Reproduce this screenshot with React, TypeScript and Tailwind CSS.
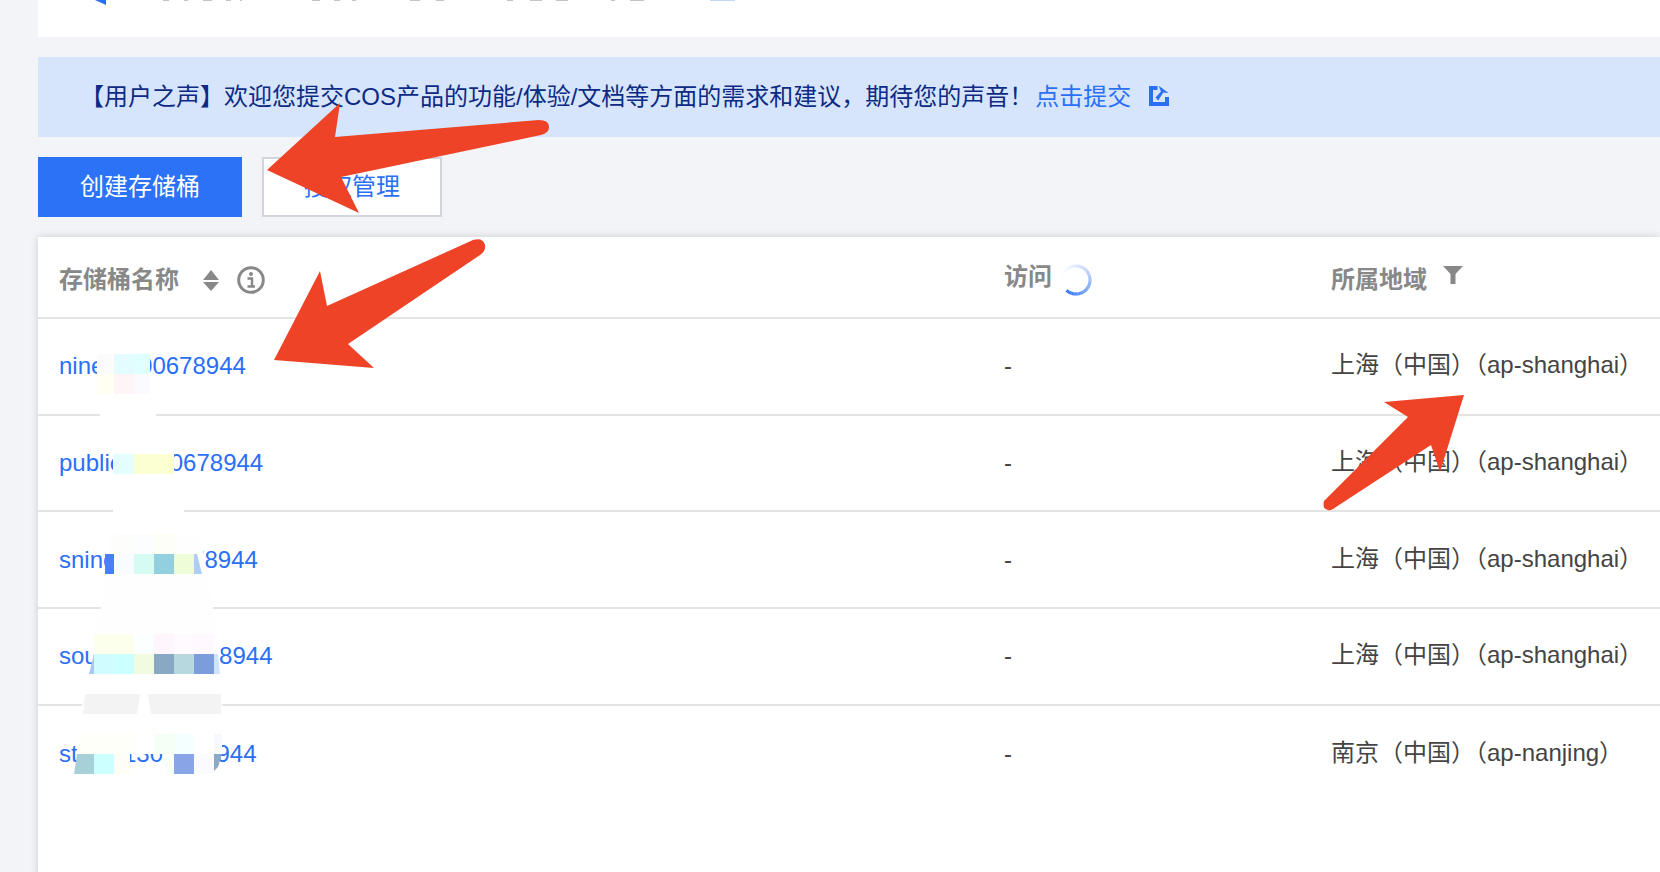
import React from "react";

const rows = [
  { name: "nine-1300678944", region: "上海（中国）（ap-shanghai）" },
  { name: "public-1300678944", region: "上海（中国）（ap-shanghai）" },
  { name: "snine-1300678944", region: "上海（中国）（ap-shanghai）" },
  { name: "source-1300678944", region: "上海（中国）（ap-shanghai）" },
  { name: "static-1300678944", region: "南京（中国）（ap-nanjing）" },
];

function Spinner() {
  const segs = Array.from({ length: 52 }, (_, i) => i);
  const pt = (deg: number) => {
    const r = (deg * Math.PI) / 180;
    return `${16 + 14 * Math.sin(r)} ${16 - 14 * Math.cos(r)}`;
  };
  return (
    <svg width="32" height="32" viewBox="0 0 32 32" fill="none" className="ml-[8px] mt-[6px]">
      {segs.map((i) => {
        const a = -90 + i * 6;
        return (
          <path
            key={i}
            d={`M${pt(a)}A14 14 0 0 1 ${pt(a + 6.5)}`}
            stroke="#2b6ff6"
            strokeWidth="3.2"
            strokeOpacity={Math.pow(i / 51, 1.6)}
          />
        );
      })}
    </svg>
  );
}

function ExternalIcon() {
  return (
    <svg width="20" height="20" viewBox="0 0 20 20" className="ml-[18px] mt-[-2px]" fill="#2b6ff6">
      <path d="M0 0h8.5v4H4v12h12v-5h4v9H0z" />
      <path d="M6.5 11.5L12 5.5 9.8 0.5h1L19.5 7l-5.2-0.5L9.2 14.5z" />
    </svg>
  );
}

function SortIcon() {
  return (
    <svg width="16" height="21" viewBox="0 0 16 21" fill="#888888" className="ml-[24px]">
      <path d="M8 0l8 10H0z" />
      <path d="M0 12h16l-8 9z" />
    </svg>
  );
}

function InfoIcon() {
  return (
    <svg width="28" height="28" viewBox="0 0 28 28" fill="none" className="ml-[18px]">
      <circle cx="14" cy="14" r="12.3" stroke="#888888" strokeWidth="3" />
      <circle cx="14" cy="8" r="2" fill="#888888" />
      <path d="M10.5 12.5H15V20M10.5 20.5h7.5" stroke="#888888" strokeWidth="2.4" />
    </svg>
  );
}

function FilterIcon() {
  return (
    <svg width="20" height="18" viewBox="0 0 20 18" fill="#888888" className="ml-[16px] mt-[-10px]">
      <path d="M0 0h20l-7.5 8v10h-5V8z" />
    </svg>
  );
}

const cells: [number, number, number, string][] = [
  // row 1
  [97, 354, 17, "#fbfbfb"], [114, 354, 20, "#e4fbff"], [134, 354, 16, "#e0ffff"],
  [97, 374, 17, "#fffff2"], [114, 374, 20, "#fff4f6"], [134, 374, 16, "#fbfbff"],
  // row 2
  [113, 454, 21, "#e4fdff"], [134, 454, 20, "#fcffd2"], [154, 454, 20, "#fcffd2"],
  // row 3
  [114, 554, 20, "#f8fbff"], [134, 554, 20, "#d5fbf2"], [154, 554, 20, "#94cfe0"], [174, 554, 20, "#eefcd8"],
  [114, 534, 20, "#fdfefb"], [134, 534, 20, "#fbfdff"], [154, 534, 20, "#fdfff6"],
  // row 4
  [94, 634, 20, "#fbffec"], [114, 634, 20, "#fbffec"], [134, 634, 20, "#fbffff"], [154, 634, 20, "#fff6fd"], [174, 634, 20, "#fffaff"], [194, 634, 20, "#fff8ff"],
  [94, 654, 20, "#d0fbff"], [114, 654, 20, "#ccffff"], [134, 654, 20, "#f0fbe0"], [154, 654, 20, "#88a8c4"], [174, 654, 20, "#b8d8e0"], [194, 654, 20, "#7c9cdc"],
  // row 5
  [94, 754, 20, "#ccffff"], [114, 754, 16, "#fffdf6"], [174, 754, 20, "#8aa4e8"], [194, 754, 20, "#fbfbff"],
  [154, 734, 20, "#f6fff6"], [174, 734, 20, "#f4ffff"], [214, 734, 8, "#f8f8ff"],
];

function Overlay() {
  return (
    <svg
      width="1660"
      height="872"
      viewBox="0 0 1660 872"
      className="absolute left-0 top-0 pointer-events-none"
    >
      {/* clipped content of the panel above */}
      <path d="M190 0h11v5z" fill="#2b6ff6" transform="translate(-95 0)" />
      <g fill="#c4c4c4">
        <rect x="163" y="0" width="6" height="1" /><rect x="184" y="0" width="4" height="1" />
        <rect x="203" y="0" width="9" height="1" /><rect x="226" y="0" width="5" height="1" />
        <rect x="240" y="0" width="2" height="1" /><rect x="312" y="0" width="8" height="1" />
        <rect x="334" y="0" width="6" height="1" /><rect x="352" y="0" width="4" height="1" />
        <rect x="410" y="0" width="10" height="1" /><rect x="436" y="0" width="8" height="1" />
        <rect x="507" y="0" width="6" height="1" /><rect x="530" y="0" width="12" height="1" />
        <rect x="556" y="0" width="12" height="1" /><rect x="611" y="0" width="4" height="1" />
        <rect x="630" y="0" width="14" height="1" />
      </g>
      <rect x="710" y="0" width="25" height="1" fill="#c4d8fb" />

      {/* pixelated redaction */}
      <g fill="#ffffff">
        <rect x="100" y="394" width="56" height="40" />
        <rect x="113" y="474" width="71" height="60" />
        <path d="M110 534h90l14 80 7 40H90l10-40z" fill="#fefefe" />
        <rect x="104" y="574" width="98" height="20" fill="#fefefe" />
        <path d="M94 674h124l4 20v40l-2 20H76l4-20 3-40z" />
      </g>
      <path d="M105 554h9v20h-9z" fill="#4a7ffb" />
      <path d="M194 554h3l5 20h-8z" fill="#b0cdf8" />
      <path d="M94 654v20h-5z" fill="#a8c8f0" />
      <path d="M214 654h4l2 20h-6z" fill="#d0e4fc" />
      <path d="M85 694h55l-3 20H83z" fill="#f3f3f3" />
      <path d="M148 694h73v20h-70z" fill="#f3f3f3" />
      <path d="M78 734h56v20H78z" fill="#fffffa" />
      <path d="M77 754h17v20H74z" fill="#a8d0d8" />
      <path d="M162 754h12v20h-7z" fill="#f8fff8" />
      <path d="M214 754h8l-4 13-7 7h-1z" fill="#8caac8" />
      {cells.map(([x, y, w, c], i) => (
        <rect key={i} x={x} y={y} width={w} height="20" fill={c} />
      ))}

      {/* red annotation arrows */}
      <g fill="#ee4326">
        <path d="M267 170L340 103 335 137 539 120Q549 120 549 127 549 133 541 135L341 177 359 213z" />
        <path d="M274 360L320 271 327 306 473 240Q483 237 485 245 486 251 480 255L348 344 374 368z" />
        <path d="M1464 395L1384 402 1408 417 1324 501Q1322 509 1328 510 1331 511 1336 507L1431 445 1440 472z" />
      </g>
    </svg>
  );
}

export default function App() {
  return (
    <div className="relative h-[872px] w-[1660px] overflow-hidden bg-[#f2f4f8] pl-[38px] font-['Liberation_Sans','Noto_Sans_CJK_SC',sans-serif] text-[24px]">
      <div className="h-[37px] bg-white" />

      <div className="mt-[20px] flex h-[80px] items-center bg-[#d6e5fc] pl-[42px] text-[#0d2a85]">
        <span>【用户之声】欢迎您提交COS产品的功能/体验/文档等方面的需求和建议，期待您的声音！</span>
        <a className="ml-[2px] text-[#2b6ff6]">点击提交</a>
        <ExternalIcon />
      </div>

      <div className="mt-[20px] flex h-[60px] items-stretch gap-[20px]">
        <button className="w-[204px] bg-[#2b72f6] text-white">创建存储桶</button>
        <button className="w-[180px] border-2 border-[#d0d5de] bg-white text-[#2b6ff6]">授权管理</button>
      </div>

      <div className="mt-[20px] h-[640px] bg-white shadow-[0_0_8px_rgba(0,0,0,0.16)]">
        <div className="grid h-[82px] grid-cols-[945px_327px_1fr] border-b-2 border-[#e4e4e4] pl-[21px] font-bold text-[#888888]">
          <div className="flex items-center pt-[6px]">
            <span>存储桶名称</span>
            <SortIcon />
            <InfoIcon />
          </div>
          <div className="flex items-center">
            <span>访问</span>
            <Spinner />
          </div>
          <div className="flex items-center pt-[6px]">
            <span>所属地域</span>
            <FilterIcon />
          </div>
        </div>
        {rows.map((r, i) => (
          <div
            key={r.name}
            className={
              i < 4
                ? "grid h-[96.7px] grid-cols-[945px_327px_1fr] items-center border-b-2 border-[#e4e4e4] pl-[21px] text-[#444444]"
                : "grid h-[96.7px] grid-cols-[945px_327px_1fr] items-center pl-[21px] text-[#444444]"
            }
          >
            <a className="text-[#2b6ff6]">{r.name}</a>
            <span>-</span>
            <span className="whitespace-nowrap pb-[2px]">{r.region}</span>
          </div>
        ))}
      </div>

      <Overlay />
    </div>
  );
}
